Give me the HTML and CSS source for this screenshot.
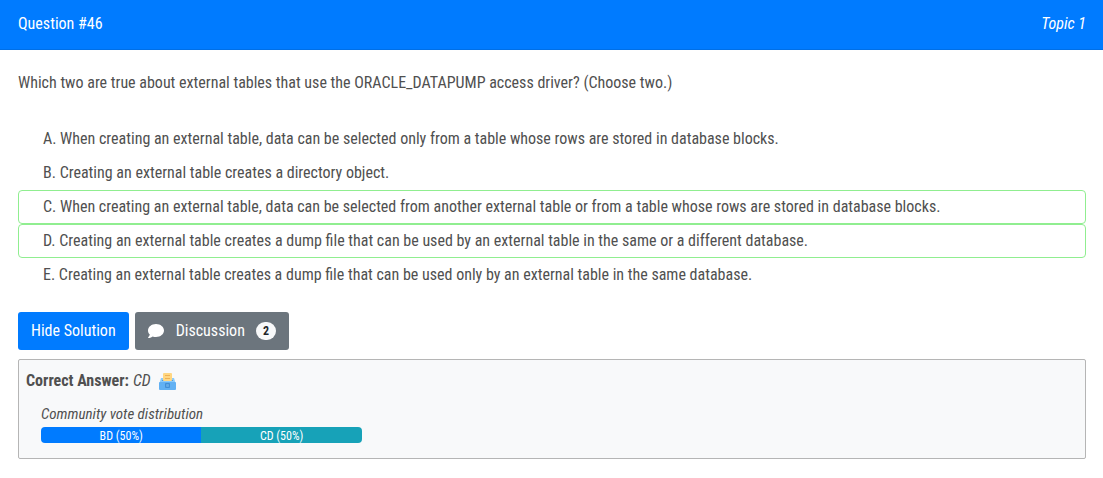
FILE: index.html
```html
<!DOCTYPE html>
<html lang="en">
<head>
<meta charset="utf-8">
<meta name="viewport" content="width=device-width, initial-scale=1">
<title>Question #46</title>
<link rel="stylesheet" href="styles.css">
</head>
<body>
<article class="card">
  <header class="card-header">
    <span>Question #46</span>
    <span class="topic">Topic 1</span>
  </header>
  <div class="card-body">
    <p class="question">Which two are true about external tables that use the ORACLE_DATAPUMP access driver? (Choose two.)</p>
    <ul class="choices">
      <li class="choice">A. When creating an external table, data can be selected only from a table whose rows are stored in database blocks.</li>
      <li class="choice">B. Creating an external table creates a directory object.</li>
      <li class="choice correct">C. When creating an external table, data can be selected from another external table or from a table whose rows are stored in database blocks.</li>
      <li class="choice correct">D. Creating an external table creates a dump file that can be used by an external table in the same or a different database.</li>
      <li class="choice">E. Creating an external table creates a dump file that can be used only by an external table in the same database.</li>
    </ul>
    <div class="actions">
      <button type="button" class="btn btn-primary">Hide Solution</button>
      <button type="button" class="btn btn-secondary">
        <svg class="comment-icon" viewBox="0 0 512 512" aria-hidden="true"><path fill="currentColor" d="M256 32C114.600 32 0 125.100 0 240c0 49.600 21.400 95 57 130.700C44.500 421.100 2.700 466 2.200 466.500c-2.200 2.300-2.800 5.700-1.500 8.700S4.800 480 8 480c66.300 0 116-31.800 140.600-51.400 32.700 12.300 69 19.400 107.400 19.400 141.400 0 256-93.100 256-208S397.400 32 256 32z"/></svg>
        <span>Discussion</span>
        <span class="badge">2</span>
      </button>
    </div>
    <section class="answer">
      <div class="answer-line">
        <strong>Correct Answer:</strong>
        <em>CD</em>
        <svg class="ballot-icon" viewBox="0 0 17 17" aria-hidden="true">
          <path fill="#8ccbfb" d="M2 5h13l1.500 5H.5z"/>
          <rect x="0" y="9" width="17" height="8" rx="1" fill="#62b1f3"/>
          <path fill="#4b9be3" d="M3 7h11v1H3z"/>
          <rect x="4" y="0" width="9" height="8" rx="1" fill="#ffd782"/>
          <path fill="#eeb156" d="M6 2h5v1H6zM6 5h5v1H6z"/>
          <rect x="6" y="10" width="5" height="5" rx="1" fill="#428fd6"/>
          <rect x="7" y="11" width="3" height="3" rx="1" fill="#62aae6"/>
        </svg>
      </div>
      <div class="votes">
        <em class="votes-title">Community vote distribution</em>
        <div class="progress">
          <div class="bar bar-blue" style="width:50%">BD (50%)</div>
          <div class="bar bar-teal" style="width:50%">CD (50%)</div>
        </div>
      </div>
    </section>
  </div>
</article>
</body>
</html>
```
FILE: styles.css
```css
* { box-sizing: border-box; }

body {
  margin: 0;
  background: #fff;
  color: #505050;
  font: 16px/24px "Roboto Condensed", Roboto, sans-serif;
}

.card-header {
  display: flex;
  justify-content: space-between;
  padding: 12px 17px 13px 18px;
  border-bottom: 1px solid #006fe6;
  background: #007bff;
  color: #fff;
}

.topic { font-style: italic; }

.card-body { padding: 21px 17px 19px 18px; }

.question { margin: 0 0 27px; }

.choices {
  margin: 0 0 20px;
  padding: 0;
  list-style: none;
}

.choice {
  padding: 4px 24px;
  border: 1px solid transparent;
  border-radius: 4px;
}

.choice.correct { border-color: #90ee90; }

.actions {
  display: flex;
  flex-wrap: wrap;
  gap: 6px;
  margin-bottom: 9px;
}

.btn {
  display: flex;
  align-items: center;
  padding: 6px 12px;
  border: 1px solid transparent;
  border-radius: 3px;
  color: #fff;
  font: inherit;
  cursor: pointer;
}

.btn-primary { background: #007bff; }

.btn-secondary { background: #6c757d; }

.comment-icon {
  width: 16px;
  height: 16px;
  margin-right: 12px;
}

.badge {
  margin-left: 11px;
  padding: 3px 7px;
  border-radius: 10px;
  background: #f8f9fa;
  color: #212529;
  font-size: 12px;
  font-weight: 700;
  line-height: 12px;
}

.answer {
  padding: 9px 7px 15px;
  border: 1px solid #b5b5b5;
  border-radius: 2px;
  background: #f8f9fa;
}

.answer-line {
  display: flex;
  align-items: center;
  gap: 4px;
}

.ballot-icon {
  width: 17px;
  height: 17px;
  margin-left: 4px;
}

.votes {
  width: 30.5%;
  margin: 9px 0 0 15px;
}

.votes-title {
  display: block;
  padding-bottom: 1px;
  font-size: 15px;
}

.progress {
  display: flex;
  height: 16px;
  overflow: hidden;
  border-radius: 4px;
}

.bar {
  color: #fff;
  font-size: 12px;
  line-height: 18px;
  text-align: center;
}

.bar-blue { background: #007bff; }

.bar-teal { background: #17a2b8; }
```
